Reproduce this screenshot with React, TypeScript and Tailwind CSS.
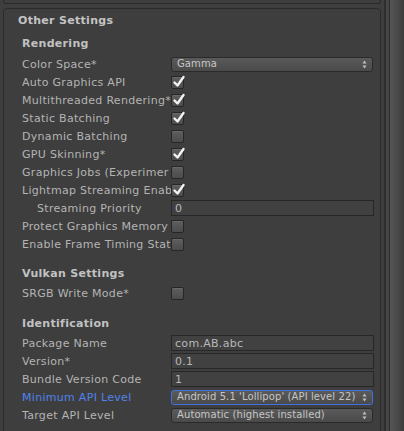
import React from "react";

// ── small controls ────────────────────────────────────────────────────────────

function Check({ on }: { on?: boolean }) {
  return (
    <div className="relative w-[13px] h-[13px] rounded-[2px] border border-[#262626] bg-gradient-to-b from-[#5e5e5e] to-[#4c4c4c] shadow-[inset_0_1px_0_rgba(255,255,255,0.08)]">
      {on && (
        <svg
          viewBox="0 0 14 14"
          className="absolute left-[0px] top-[-2px] w-[14px] h-[14px]"
        >
          <path
            d="M2.5 7.5 L5.5 10.5 L11.5 2"
            fill="none"
            stroke="#f2f2f2"
            strokeWidth="2.4"
            strokeLinecap="round"
            strokeLinejoin="round"
          />
        </svg>
      )}
    </div>
  );
}

function Popup({ text, focus }: { text: string; focus?: boolean }) {
  return (
    <div
      className={`flex items-center justify-between w-[202px] h-[15px] rounded-[3px] bg-gradient-to-b from-[#5a5a5a] to-[#4a4a4a] pl-[5px] pr-[5px] text-[10px] tracking-[0.1px] text-[#c6c6c6] ${
        focus ? "border border-[#3f72e0]" : "border border-[#2a2a2a]"
      }`}
    >
      <span className="whitespace-nowrap overflow-hidden leading-none">{text}</span>
      <svg viewBox="0 0 5 9" className="w-[5px] h-[9px] shrink-0 ml-[2px]">
        <path d="M2.5 0.5 L4.5 3.5 L0.5 3.5 Z" fill="#c0c0c0" />
        <path d="M2.5 8.5 L4.5 5.5 L0.5 5.5 Z" fill="#c0c0c0" />
      </svg>
    </div>
  );
}

function Field({ value }: { value: string }) {
  return (
    <div className="flex items-center w-[203px] h-[16px] border border-[#272727] bg-[#414141] pl-[3px] text-[11px] tracking-[0.3px] text-[#b8b8b8] leading-none">
      {value}
    </div>
  );
}

function Row({
  label,
  indent,
  blue,
  children,
}: {
  label: string;
  indent?: boolean;
  blue?: boolean;
  children?: React.ReactNode;
}) {
  return (
    <div className="flex items-center h-[18px]">
      <div
        className={`w-[149px] overflow-hidden whitespace-nowrap text-[11px] tracking-[0.3px] leading-none ${
          indent ? "pl-[15px]" : ""
        } ${blue ? "text-[#5083ee]" : "text-[#b4b4b4]"}`}
      >
        {label}
      </div>
      <div>{children}</div>
    </div>
  );
}

function Heading({ text }: { text: string }) {
  return (
    <div className="flex items-center h-[18px] text-[11px] font-bold tracking-[0.3px] text-[#c2c2c2] leading-none">
      {text}
    </div>
  );
}

// ── main ──────────────────────────────────────────────────────────────────────

export default function App() {
  return (
    <div className="flex w-[404px] h-[431px] overflow-hidden bg-[#3e3e3e] font-['DejaVu_Sans',sans-serif]">
      <div className="w-[384px] px-[3px]">
        {/* tail of previous box */}
        <div className="h-[4px] border-x border-b border-[#2a2a2a] rounded-b-[3px]" />

        {/* Other Settings box */}
        <div className="mt-[4px] h-[440px] border border-[#2a2a2a] rounded-t-[4px] pl-[14px]">
          <div className="flex items-center h-[22px] text-[11px] font-bold tracking-[0.3px] text-[#c4c4c4] leading-none">
            Other Settings
          </div>

          <div className="pl-[4px] mt-[3px]">
            <Heading text="Rendering" />
            <div className="mt-[3px]">
              <Row label="Color Space*">
                <Popup text="Gamma" />
              </Row>
              <Row label="Auto Graphics API">
                <Check on />
              </Row>
              <Row label="Multithreaded Rendering*">
                <Check on />
              </Row>
              <Row label="Static Batching">
                <Check on />
              </Row>
              <Row label="Dynamic Batching">
                <Check />
              </Row>
              <Row label="GPU Skinning*">
                <Check on />
              </Row>
              <Row label="Graphics Jobs (Experimer">
                <Check />
              </Row>
              <Row label="Lightmap Streaming Enab">
                <Check on />
              </Row>
              <Row label="Streaming Priority" indent>
                <Field value="0" />
              </Row>
              <Row label="Protect Graphics Memory">
                <Check />
              </Row>
              <Row label="Enable Frame Timing Stat">
                <Check />
              </Row>
            </div>

            <div className="mt-[11px]">
              <Heading text="Vulkan Settings" />
            </div>
            <div className="mt-[2px]">
              <Row label="SRGB Write Mode*">
                <Check />
              </Row>
            </div>

            <div className="mt-[12px]">
              <Heading text="Identification" />
            </div>
            <div className="mt-[2px]">
              <Row label="Package Name">
                <Field value="com.AB.abc" />
              </Row>
              <Row label="Version*">
                <Field value="0.1" />
              </Row>
              <Row label="Bundle Version Code">
                <Field value="1" />
              </Row>
              <Row label="Minimum API Level" blue>
                <Popup text="Android 5.1 'Lollipop' (API level 22)" focus />
              </Row>
              <Row label="Target API Level">
                <Popup text="Automatic (highest installed)" />
              </Row>
            </div>
          </div>
        </div>
      </div>

      {/* scrollbar */}
      <div className="flex h-full">
        <div className="w-[2px] bg-[#2e2e2e]" />
        <div className="w-[3px] bg-[#454545]" />
        <div className="w-[1px] bg-[#2c2c2c]" />
        <div className="w-[14px] bg-gradient-to-r from-[#555555] via-[#4a4a4a] to-[#3c3c3c]" />
      </div>
    </div>
  );
}
